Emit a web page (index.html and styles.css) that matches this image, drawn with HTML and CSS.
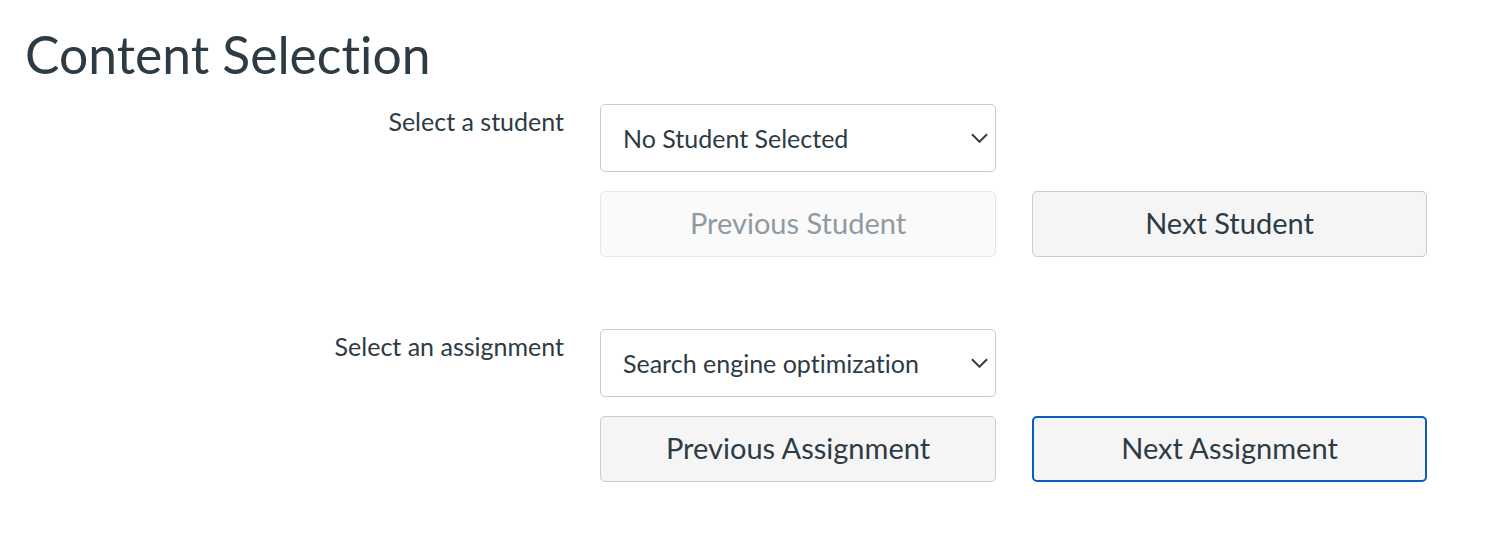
FILE: index.html
```html
<!DOCTYPE html>
<html lang="en">
<head>
<meta charset="utf-8">
<title>Content Selection</title>
<link rel="stylesheet" href="styles.css">
</head>
<body>
<main class="page">
  <h1 class="title">Content Selection</h1>
  <div class="group">
    <label class="label" for="student">Select a student</label>
    <div class="select">
      <span class="select-value" id="student">No Student Selected</span>
      <svg class="chevron" viewBox="0 0 18 10" width="17" height="10" aria-hidden="true"><path d="M1 1l8 8 8-8" fill="none" stroke="#2d3b45" stroke-width="2"/></svg>
    </div>
    <button class="btn btn-prev btn-disabled" disabled>Previous Student</button>
    <button class="btn btn-next">Next Student</button>
  </div>
  <div class="group">
    <label class="label" for="assignment">Select an assignment</label>
    <div class="select">
      <span class="select-value" id="assignment">Search engine optimization</span>
      <svg class="chevron" viewBox="0 0 18 10" width="17" height="10" aria-hidden="true"><path d="M1 1l8 8 8-8" fill="none" stroke="#2d3b45" stroke-width="2"/></svg>
    </div>
    <button class="btn btn-prev">Previous Assignment</button>
    <button class="btn btn-next btn-focus">Next Assignment</button>
  </div>
</main>
</body>
</html>
```
FILE: styles.css
```css
* { box-sizing: border-box; }
html, body { margin: 0; padding: 0; background: #fff; }
body {
  font-family: Lato, "Noto Sans", "Liberation Sans", sans-serif;
  color: #2d3b45;
  font-variant-ligatures: none;
}
.page { padding: 24px 25px 0 25px; }
.title {
  margin: 0;
  font-size: 51.6px;
  font-weight: 400;
  line-height: 60px;
}
.group {
  display: grid;
  grid-template-columns: 539px 396px 395px;
  column-gap: 36px;
  row-gap: 19px;
  margin-top: 20px;
}
.group + .group { margin-top: 72px; }
.label {
  grid-column: 1;
  text-align: right;
  font-size: 25px;
  line-height: 30px;
  padding-top: 2px;
}
.select {
  grid-column: 2;
  height: 68px;
  border: 1px solid #c7cdd1;
  border-radius: 5px;
  background: #fff;
  display: flex;
  align-items: center;
  justify-content: space-between;
  padding: 0 7px 0 22px;
  font-size: 25px;
}
.chevron { display: block; }
.btn {
  height: 66px;
  border: 1px solid #c7cdd1;
  border-radius: 5px;
  background: #f5f5f5;
  color: #2d3b45;
  font-family: inherit;
  font-variant-ligatures: none;
  font-size: 29px;
  padding: 0 0 3px 0;
}
.btn-prev { grid-column: 2; }
.btn-next { grid-column: 3; }
.btn-disabled {
  background: #fafafa;
  border-color: #e4e7e9;
  color: #909aa2;
}
.btn-focus {
  border: 2px solid #0b5cbd;
}
```
